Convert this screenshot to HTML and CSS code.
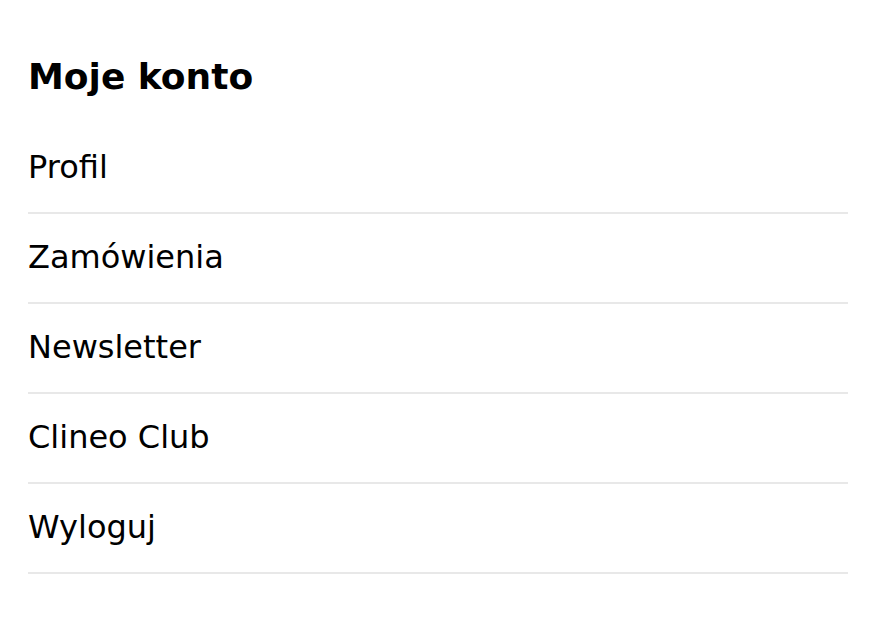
FILE: index.html
```html
<!DOCTYPE html>
<html lang="pl">
<head>
<meta charset="utf-8">
<link rel="stylesheet" href="styles.css">
<title>Moje konto</title>
</head>
<body>
<nav class="account">
  <h2 class="account-title">Moje konto</h2>
  <ul class="account-menu">
    <li class="account-item"><a href="#">Profil</a></li>
    <li class="account-item"><a href="#">Zamówienia</a></li>
    <li class="account-item"><a href="#">Newsletter</a></li>
    <li class="account-item"><a href="#">Clineo Club</a></li>
    <li class="account-item"><a href="#">Wyloguj</a></li>
  </ul>
</nav>
</body>
</html>
```

FILE: styles.css
```css
html, body {
  margin: 0;
  background: #fff;
}
body {
  font-family: "DejaVu Sans", "Open Sans", sans-serif;
  color: #000;
}
.account {
  padding: 52px 26px 0 28px;
}
.account-title {
  margin: 0 0 22px;
  font-size: 36px;
  font-weight: 700;
  line-height: 50px;
  height: 50px;
}
.account-menu {
  list-style: none;
  margin: 0;
  padding: 0;
}
.account-item {
  height: 88px;
  border-bottom: 2px solid #e8e8e8;
  display: flex;
  align-items: center;
}
.account-item a {
  color: #000;
  text-decoration: none;
  font-size: 32px;
  line-height: 40px;
  margin-bottom: 3px;
}
```
